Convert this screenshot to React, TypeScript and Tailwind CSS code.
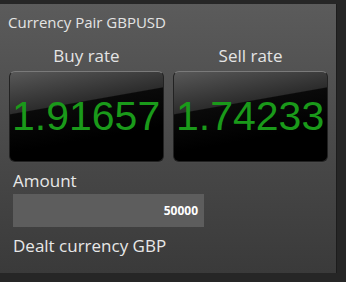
import React from "react";

function RateButton({ value }: { value: string }) {
  return (
    <div className="relative h-[91px] overflow-hidden rounded-[6px] border border-[#222] border-t-[#7a7a7a] bg-[linear-gradient(170deg,#585858_0%,#2c2c2c_36%,#0a0a0a_37%,#000_70%)] shadow-[0_1px_0_#4a4a4a]">
      <div
        className="absolute left-[2px] top-[24px] whitespace-nowrap text-[41px] leading-none text-[#1a9a1a]"
        style={{ fontFamily: '"Liberation Sans", Arial, sans-serif' }}
      >
        {value}
      </div>
    </div>
  );
}

export default function App() {
  return (
    <div
      className="h-[282px] w-[346px] bg-[#262626] pt-[4px] font-medium"
      style={{ fontFamily: '"Open Sans", "Noto Sans", sans-serif' }}
    >
      <div className="h-[269px] w-[337px] border-r border-[#1c1c1c] bg-[linear-gradient(180deg,#5b5b5b_0%,#4a4a4a_50%,#3a3a3a_100%)] px-[8px] pt-[8px]">
        <div className="text-[15px] leading-[20px] text-[#e4e4e4]">Currency Pair GBPUSD</div>
        <div className="mt-[13px] grid grid-cols-[155px_155px] gap-x-[9px] pl-[1px]">
          <div className="text-center text-[17px] leading-[22px] text-[#e4e4e4]">Buy rate</div>
          <div className="text-center text-[17px] leading-[22px] text-[#e4e4e4]">Sell rate</div>
          <div className="mt-[4px]">
            <RateButton value="1.91657" />
          </div>
          <div className="mt-[4px]">
            <RateButton value="1.74233" />
          </div>
        </div>
        <div className="pl-[5px]">
          <div className="mt-[8px] text-[17px] leading-[22px] text-[#e8e8e8]">Amount</div>
          <div className="mt-[2px] flex h-[33px] w-[191px] items-center justify-end bg-[#5d5d5d] pr-[6px] text-[12px] font-bold text-white">
            50000
          </div>
          <div className="mt-[8px] text-[17px] leading-[22px] text-[#e8e8e8]">Dealt currency GBP</div>
        </div>
      </div>
    </div>
  );
}
